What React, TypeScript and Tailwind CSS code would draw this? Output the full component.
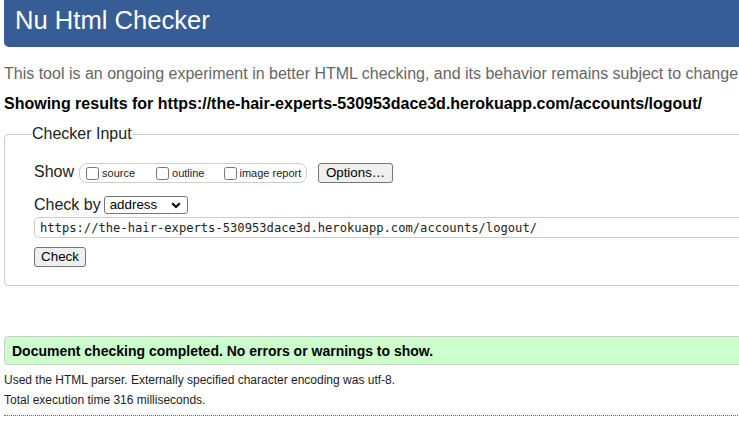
import React from "react";

export default function App() {
  return (
    <div className="w-[739px] h-[421px] overflow-hidden bg-white text-black font-['Liberation_Sans',Arial,sans-serif]">
      <div className="w-[1000px] pl-[4px] whitespace-nowrap">
        <header className="h-[47px] bg-[#365d95] rounded-bl-[5px] pl-[11px] pt-[6px]">
          <h1 className="text-white text-[25.6px] leading-[29px] font-normal">Nu Html Checker</h1>
        </header>
        <p className="mt-[18px] text-[16px] leading-[18px] text-[#666]">
          This tool is an ongoing experiment in better HTML checking, and its behavior remains subject to change
        </p>
        <p className="mt-[12px] text-[16px] leading-[18px] font-bold text-black">
          Showing results for https://the-hair-experts-530953dace3d.herokuapp.com/accounts/logout/
        </p>
        <fieldset className="mt-[12px] border border-[#ccc] rounded-[4px] pl-[29px] pt-[20px] pb-[17px]">
          <legend className="ml-[-2px] text-[16px] leading-[18px] text-[#222]">Checker Input</legend>
          <div className="flex items-center h-[20px]">
            <span className="text-[16px] leading-[18px] text-[#222] mt-[-2px]">Show</span>
            <div className="ml-[5px] h-[20px] w-[228px] border border-[#ccc] rounded-[8px] flex items-center pl-[6px]">
              <label className="flex items-center">
                <input type="checkbox" className="w-[13px] h-[13px] m-0" />
                <span className="ml-[3px] text-[11px] leading-[13px] text-[#222] mt-[1px]">source</span>
              </label>
              <label className="flex items-center ml-[21px]">
                <input type="checkbox" className="w-[13px] h-[13px] m-0" />
                <span className="ml-[3px] text-[11px] leading-[13px] text-[#222] mt-[1px]">outline</span>
              </label>
              <label className="flex items-center ml-[20px]">
                <input type="checkbox" className="w-[13px] h-[13px] m-0" />
                <span className="ml-[2px] text-[11px] leading-[13px] text-[#222] mt-[1px]">image report</span>
              </label>
            </div>
            <button className="ml-[11px] w-[75px] h-[20px] border border-[#767676] bg-[#efefef] rounded-[3px] text-[13.33px] leading-[16px] text-black">
              Options…
            </button>
          </div>
          <div className="flex items-center h-[18px] mt-[13px]">
            <span className="text-[16px] leading-[18px] text-[#222]">Check by</span>
            <div className="ml-[3px] w-[84px] h-[18px] border border-[#767676] rounded-[3px] flex items-center pl-[5px] pr-[6px] justify-between bg-white">
              <span className="text-[13.33px] leading-[16px] text-black">address</span>
              <svg width="10" height="7" viewBox="0 0 10 7">
                <path d="M1.2 1.2 L5 5 L8.8 1.2" fill="none" stroke="#000" strokeWidth="2" />
              </svg>
            </div>
          </div>
          <div className="mt-[3px] h-[21px] border border-[#ccc] rounded-l-[5px] flex items-center pl-[5px] bg-white">
            <span className="font-['DejaVu_Sans_Mono',monospace] text-[12.15px] leading-[14px] text-[#222]">
              https://the-hair-experts-530953dace3d.herokuapp.com/accounts/logout/
            </span>
          </div>
          <button className="mt-[9px] w-[52px] h-[20px] border border-[#767676] bg-[#efefef] rounded-[3px] text-[13.33px] leading-[16px] text-black">
            Check
          </button>
        </fieldset>
        <div className="mt-[50px] h-[29px] border border-[#ccc] bg-[#ccffcc] rounded-l-[4px] flex items-center pl-[7px]">
          <span className="text-[14px] leading-[16px] font-bold text-black">
            Document checking completed. No errors or warnings to show.
          </span>
        </div>
        <p className="mt-[8px] text-[12px] leading-[14px] text-[#222]">
          Used the HTML parser. Externally specified character encoding was utf-8.
        </p>
        <p className="mt-[6px] text-[12px] leading-[14px] text-[#222]">Total execution time 316 milliseconds.</p>
        <div className="mt-[8px] border-b border-dotted border-[#666]" />
      </div>
    </div>
  );
}
